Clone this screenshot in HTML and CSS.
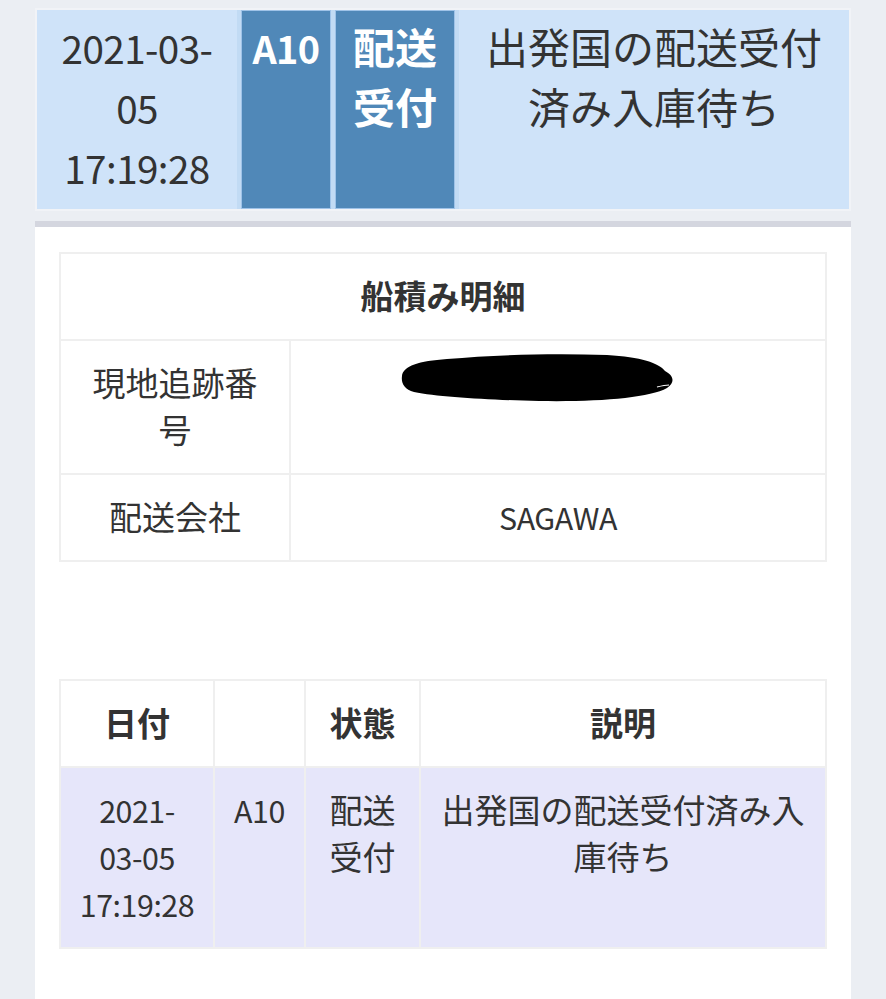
FILE: index.html
```html
<!DOCTYPE html>
<html lang="ja">
<head>
<meta charset="utf-8">
<title>配送状況</title>
<link rel="stylesheet" href="styles.css">
</head>
<body>
<div class="page">
  <div class="status-bar">
    <div class="st-cell st-light st-date"><span class="latin">2021-03-05 17:19:28</span></div>
    <div class="st-cell st-dark st-code"><span class="latin">A10</span></div>
    <div class="st-cell st-dark st-state">配送受付</div>
    <div class="st-cell st-light st-desc">出発国の配送受付済み入庫待ち</div>
  </div>

  <div class="card">
    <table class="grid detail">
      <colgroup><col class="c-label"><col></colgroup>
      <tr><th colspan="2" class="head">船積み明細</th></tr>
      <tr>
        <td>現地追跡番号</td>
        <td><svg class="redact" width="276" height="52" viewBox="0 0 276 52"><path d="M3,24 C4,14 20,9 48,7 C95,3 150,1 208,3 C242,5 260,11 266,19 C274,23 277,30 268,36 C250,46 200,50 140,49 C90,48 40,45 15,40 C5,37 2,31 3,24 Z" fill="#000"/><path d="M258,35 C262,34 266,33 270,33" stroke="#fff" stroke-width="1.2" fill="none"/></svg></td>
      </tr>
      <tr><td>配送会社</td><td><span class="latin">SAGAWA</span></td></tr>
    </table>

    <table class="grid history">
      <colgroup><col class="c-date"><col class="c-code"><col class="c-state"><col></colgroup>
      <tr class="hist-head"><th>日付</th><th></th><th>状態</th><th>説明</th></tr>
      <tr class="hist-row"><td><span class="latin">2021-03-05 17:19:28</span></td><td><span class="latin">A10</span></td><td>配送受付</td><td>出発国の配送受付済み入庫待ち</td></tr>
    </table>
  </div>
</div>
</body>
</html>
```

FILE: styles.css
```css
html, body {
  margin: 0;
  padding: 0;
  background: #ebeef3;
}
body {
  font-family: "Noto Sans CJK JP", "Noto Sans", sans-serif;
  color: #333333;
}
.page {
  padding: 8px 35px 0 35px;
}
.latin {
  font-size: 0.92em;
  letter-spacing: -0.015em;
  line-height: 1;
}
.status-bar {
  display: grid;
  grid-template-columns: 200px 90px 120px 1fr;
  gap: 4px;
  border: 2px solid #f1f3f7;
  background: #c2dbf4;
}
.st-cell {
  font-size: 42px;
  line-height: 60px;
  text-align: center;
  padding: 6px 8px 13px 8px;
}
.st-light {
  background: #cfe3f9;
  color: #333333;
}
.st-dark {
  background: #5088b8;
  color: #ffffff;
  font-weight: 700;
  box-shadow: inset 0 0 0 1px #9fc3e8;
}
.st-code .latin {
  font-size: 0.9em;
}
.card {
  margin-top: 10px;
  background: #ffffff;
  border-top: 6px solid #d4d6df;
  padding: 25px 24px 52px 24px;
}
.grid {
  width: 768px;
  border-collapse: collapse;
  table-layout: fixed;
  font-size: 33px;
  line-height: 47px;
}
.grid th, .grid td {
  border: 2px solid #efefef;
  padding: 18px 18px 20px 18px;
  text-align: center;
  vertical-align: top;
  font-weight: 400;
}
.grid th {
  font-weight: 700;
}
.c-label { width: 230px; }
.redact {
  display: inline-block;
  vertical-align: top;
  margin: -7px 42px 0 0;
}
.history {
  margin-top: 117px;
}
.c-date { width: 154px; }
.c-code { width: 91px; }
.c-state { width: 115px; }
.hist-row td {
  background: #e6e6fa;
}
```
